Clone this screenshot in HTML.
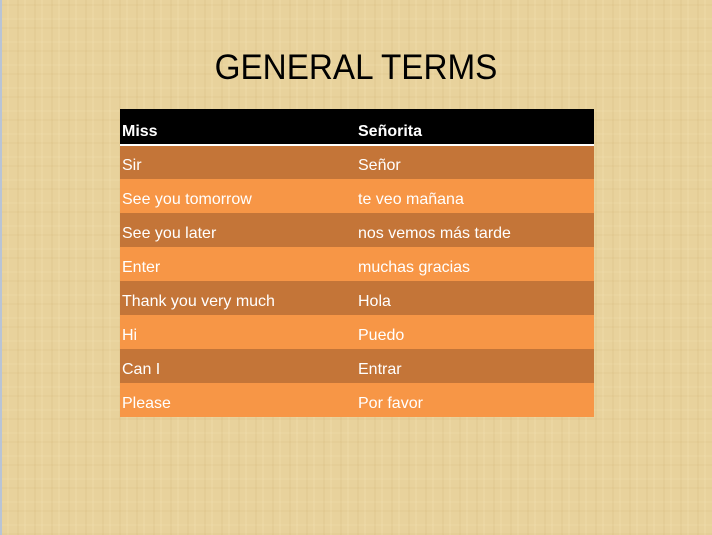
<!DOCTYPE html>
<html><head><style>
body{margin:0;width:712px;height:535px;overflow:hidden;font-family:"Liberation Sans",sans-serif;
background:#e8d29c;
background-image:
repeating-linear-gradient(90deg,rgba(180,140,70,.07) 0 2px,transparent 2px 7px,rgba(255,240,200,.12) 7px 9px,transparent 9px 17px),
repeating-linear-gradient(0deg,rgba(180,140,70,.06) 0 2px,transparent 2px 9px,rgba(255,240,200,.1) 9px 11px,transparent 11px 23px);
position:relative}
.l{position:absolute;left:0;top:0;width:2px;height:535px;background:#b8c4d6}
h1{position:absolute;top:48px;left:0;width:712px;text-align:center;margin:0;font-weight:normal;font-size:35px;color:#000;transform:scaleX(0.95)}
table{position:absolute;left:120px;top:109px;width:474px;border-collapse:collapse;font-size:16px;color:#fff}
td{padding:7px 0 0 2px;height:34px;vertical-align:middle;box-sizing:border-box}
td:first-child{width:236px}
tr.h td{background:#000;font-weight:bold;height:36px;border-bottom:2px solid #fff;padding-top:10px}
tr.d td{background:#c47538}
tr.o td{background:#f79646}
</style></head><body>
<div class="l"></div>
<h1>GENERAL TERMS</h1>
<table>
<tr class="h"><td>Miss</td><td>Señorita</td></tr>
<tr class="d"><td>Sir</td><td>Señor</td></tr>
<tr class="o"><td>See you tomorrow</td><td>te veo mañana</td></tr>
<tr class="d"><td>See you later</td><td>nos vemos más tarde</td></tr>
<tr class="o"><td>Enter</td><td>muchas gracias</td></tr>
<tr class="d"><td>Thank you very much</td><td>Hola</td></tr>
<tr class="o"><td>Hi</td><td>Puedo</td></tr>
<tr class="d"><td>Can I</td><td>Entrar</td></tr>
<tr class="o"><td>Please</td><td>Por favor</td></tr>
</table>
</body></html>
